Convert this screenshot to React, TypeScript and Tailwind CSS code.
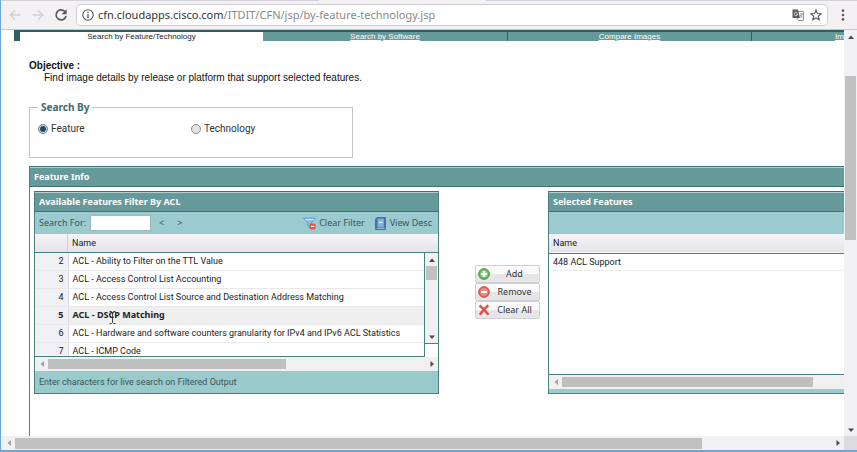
import { useState } from "react"
import clsx from "clsx"

const features = [
  { id: 2, name: "ACL - Ability to Filter on the TTL Value" },
  { id: 3, name: "ACL - Access Control List Accounting" },
  { id: 4, name: "ACL - Access Control List Source and Destination Address Matching" },
  { id: 5, name: "ACL - DSCP Matching" },
  { id: 6, name: "ACL - Hardware and software counters granularity for IPv4 and IPv6 ACL Statistics" },
  { id: 7, name: "ACL - ICMP Code" },
]

type Direction = "up" | "down" | "left" | "right"

const arrowPaths: Record<Direction, string> = {
  up: "M1 6L4 2.5L7 6Z",
  down: "M1 2.5L4 6L7 2.5Z",
  left: "M6 1L2.5 4L6 7Z",
  right: "M2.5 1L6 4L2.5 7Z",
}

function ArrowButton({ direction, muted }: { direction: Direction; muted?: boolean }) {
  return (
    <button
      aria-label={`Scroll ${direction}`}
      className={clsx("flex h-[13px] w-[13px] shrink-0 items-center justify-center", muted ? "text-[#a3a3a3]" : "text-[#4a4a4a]")}
    >
      <svg viewBox="0 0 8 8" className="h-2 w-2" fill="currentColor">
        <path d={arrowPaths[direction]} />
      </svg>
    </button>
  )
}

function BackIcon({ flip }: { flip?: boolean }) {
  return (
    <svg viewBox="0 0 12 12" className={clsx("h-3 w-3", flip && "rotate-180")} fill="none" stroke="#d3d1d6" strokeWidth="1.5">
      <path d="M11.5 6H1.5M6 1.3L1.3 6L6 10.7" />
    </svg>
  )
}

function BrowserBar() {
  return (
    <header className="shrink-0 border-b border-[#c9c5cc] bg-[#f3f1f4]">
      <div className="flex h-px bg-[#d5d1d8]">
        <div className="ml-[318px] w-[167px] bg-[#f3f1f4]" />
      </div>
      <div className="flex h-7 items-center pl-2">
        <button aria-label="Back" className="mr-[11px]"><BackIcon /></button>
        <button aria-label="Forward" className="mr-[10px]"><BackIcon flip /></button>
        <button aria-label="Reload" className="mr-2">
          <svg viewBox="0 0 14 14" className="h-[14px] w-[14px]">
            <path d="M11.2 4A5 5 0 1 0 12 8" fill="none" stroke="#5a5a5a" strokeWidth="1.7" />
            <path d="M12.6 1.2V6.2H7.6Z" fill="#5a5a5a" />
          </svg>
        </button>
        <div className="flex h-[22px] min-w-0 flex-1 items-center rounded-sm border border-[#cfccd2] bg-white pl-[5px] pr-[5px]">
          <svg viewBox="0 0 12 12" className="h-3 w-3 shrink-0" fill="none" stroke="#555">
            <circle cx="6" cy="6" r="5.2" strokeWidth="1.1" />
            <path d="M6 5.2V9M6 2.8V4.1" strokeWidth="1.4" />
          </svg>
          <div className="ml-1 flex-1 truncate font-['Noto_Sans','Open_Sans',sans-serif] text-[11px] leading-4 text-[#8a8a8a]">
            <span className="text-[#333]">cfn.cloudapps.cisco.com</span>/ITDIT/CFN/jsp/by-feature-technology.jsp
          </div>
          <button aria-label="Translate" className="mr-[6px]">
            <svg viewBox="0 0 12 12" className="h-3 w-3">
              <path d="M5 2.5H11.5V11.5H6.5L5 9Z" fill="#fff" stroke="#777" strokeWidth="0.8" />
              <path d="M0.5 0.5H6L8 9H0.5Z" fill="#5c5c5c" />
              <path d="M5.3 4A1.7 1.7 0 1 0 5.6 5H4" fill="none" stroke="#e8e8e8" strokeWidth="0.8" />
              <path d="M7.8 5H10.8M9.3 4V5M10.3 5C10 6.8 9 8 8.2 8.6M8.3 6C9 7.3 9.7 8.2 10.5 8.8" fill="none" stroke="#777" strokeWidth="0.7" />
            </svg>
          </button>
          <button aria-label="Bookmark">
            <svg viewBox="0 0 12 12" className="h-3 w-3" fill="none" stroke="#555" strokeWidth="1.1">
              <path d="M6 1L7.4 4.5L11.2 4.7L8.3 7.1L9.2 10.8L6 8.8L2.8 10.8L3.7 7.1L0.8 4.7L4.6 4.5Z" />
            </svg>
          </button>
        </div>
        <button aria-label="Menu" className="flex w-[29px] justify-center">
          <svg viewBox="0 0 4 12" className="h-3 w-1" fill="#5a5a5a">
            <circle cx="2" cy="1.6" r="1.3" />
            <circle cx="2" cy="6" r="1.3" />
            <circle cx="2" cy="10.4" r="1.3" />
          </svg>
        </button>
      </div>
    </header>
  )
}

function TabBar() {
  return (
    <nav className="flex h-[11px] border-t-2 border-[#2f5f5f] bg-[#669999] text-center font-['Liberation_Sans',Arial,sans-serif] text-[8px] leading-[9px] text-white">
      <a href="#feature" className="w-[249px] border-l-[6px] border-[#2f5f5f] bg-white text-[#222]">Search by Feature/Technology</a>
      <a href="#software" className="w-[244px] underline">Search by Software</a>
      <a href="#compare" className="w-[244px] border-l border-[#2f5f5f] underline">Compare Images</a>
      <a href="#images" className="w-[244px] border-l border-[#2f5f5f] pl-[83px] text-left underline">Images</a>
    </nav>
  )
}

function PanelTitle({ children }: { children: string }) {
  return (
    <h2 className="flex h-[21px] items-center border-y border-[#3f7373] bg-[#669999] pl-1 font-['Noto_Sans','Open_Sans',sans-serif] text-[9px] font-bold text-white shadow-[inset_0_1px_0_#b5d0d0]">
      {children}
    </h2>
  )
}

function SearchBy() {
  const [mode, setMode] = useState("Feature")
  return (
    <fieldset className="mt-[17px] h-[57px] w-[324px] border border-[#c4c4c8] pl-2">
      <legend className="px-[3px] font-['Noto_Sans','Open_Sans',sans-serif] text-[10px] leading-3 font-bold text-[#3d6b70]">Search By</legend>
      <div className="mt-[10px] flex text-[10px] leading-3 text-[#333]">
        {["Feature", "Technology"].map((option) => (
          <label key={option} className="flex w-[153px] items-center gap-[3px]">
            <input
              type="radio"
              name="search-by"
              checked={mode === option}
              onChange={() => setMode(option)}
              className="h-[10px] w-[10px] appearance-none rounded-full border border-[#8c8c8c] bg-[#e4e4e4] checked:bg-[#1e4a66] checked:shadow-[inset_0_0_0_1px_#dde6ec]"
            />
            {option}
          </label>
        ))}
      </div>
    </fieldset>
  )
}

function FilterIcon() {
  return (
    <svg viewBox="0 0 13 13" className="h-[13px] w-[13px]">
      <path d="M0.5 1.2H12.3L8 6.2V11.5L5 9.5V6.2Z" fill="#8dbbe2" stroke="#5d93c4" strokeWidth="0.8" />
      <path d="M2 2.6H10.8" stroke="#e6f2fb" />
      <rect x="6.6" y="6.4" width="6" height="6" rx="1.6" fill="#dd5546" />
      <path d="M8 9.4H11.2" stroke="#fff" strokeWidth="1.3" />
    </svg>
  )
}

function BookIcon() {
  return (
    <svg viewBox="0 0 11 13" className="h-[13px] w-[11px]">
      <path d="M2 0.6H10.4V12.4H0.6V2Z" fill="#4678ae" stroke="#2f5f95" strokeWidth="0.8" />
      <path d="M2.6 1.6H8.8V10.4H2.6Z" fill="#86afda" />
      <path d="M3.8 5.4H7.6" stroke="#e9f3fc" strokeWidth="1.2" />
      <path d="M1.8 11.4H9.6" stroke="#d5e4f2" strokeWidth="0.7" />
    </svg>
  )
}

function AvailableFeatures() {
  const [query, setQuery] = useState("")
  return (
    <section className="w-[405px] border-x border-b border-[#4a8080]">
      <PanelTitle>Available Features Filter By ACL</PanelTitle>
      <div className="flex h-[22px] items-center bg-linear-to-b from-[#9ccad0] to-[#98cbce] pr-[6px] pl-1 font-['Noto_Sans','Open_Sans',sans-serif] text-[#3c5558]">
        <label htmlFor="search-for">Search For:</label>
        <input
          id="search-for"
          value={query}
          onChange={(e) => setQuery(e.target.value)}
          className="ml-1 h-4 w-[61px] border border-[#9fb8bc] bg-white px-1"
        />
        <button aria-label="Previous match" className="ml-2">&lt;</button>
        <button aria-label="Next match" className="ml-[13px]">&gt;</button>
        <button className="ml-auto flex items-center gap-[3px]"><FilterIcon />Clear Filter</button>
        <button className="ml-[10px] flex items-center gap-1"><BookIcon />View Desc</button>
      </div>
      <div className="flex h-[19px] items-center border-b border-[#4a8080] bg-linear-to-b from-[#f7f5f9] to-[#e4e3e7]">
        <div className="h-full w-[33px] border-r border-[#cfcfd3]" />
        <span className="pl-1">Name</span>
      </div>
      <div className="flex h-[104px] items-start">
        <div className="h-full min-w-0 flex-1 overflow-hidden border-r border-b border-[#4a8080]">
          <table className="-mt-px w-full border-collapse">
            <tbody>
              {features.map((feature) => (
                <tr
                  key={feature.id}
                  className={clsx("h-[18px] border-b border-[#e9e9ed]", feature.id === 5 && "bg-[#efeff0] font-['Noto_Sans','Open_Sans',sans-serif] font-bold")}
                >
                  <td className="w-[33px] border-r border-[#dcdce0] bg-[#f1f0f4] p-0 pr-1 text-right">{feature.id}</td>
                  <td className="p-0 pl-1 whitespace-nowrap">{feature.name}</td>
                </tr>
              ))}
            </tbody>
          </table>
        </div>
        <div className="flex h-[91px] w-[13px] flex-col justify-between border-b border-[#4a8080] bg-[#f1f0f3]">
          <div>
            <ArrowButton direction="up" />
            <div className="mx-px h-[14px] bg-[#c1c1c1]" />
          </div>
          <ArrowButton direction="down" />
        </div>
      </div>
      <div className="flex h-[14px] items-center bg-[#f0f0f1]">
        <ArrowButton direction="left" muted />
        <div className="h-[10px] w-[238px] bg-[#bfc0c0]" />
        <div className="ml-auto"><ArrowButton direction="right" /></div>
      </div>
      <div className="flex h-[22px] items-center bg-[#99cbcd] pl-1 text-[#3c5558]">
        Enter characters for live search on Filtered Output
      </div>
    </section>
  )
}

const actions = [
  {
    label: "Add",
    icon: (
      <>
        <circle cx="6" cy="6" r="5.4" fill="#62b257" stroke="#438d3c" strokeWidth="0.8" />
        <circle cx="6" cy="6" r="3.8" fill="#93cf86" />
        <path d="M6 3V9M3 6H9" stroke="#fff" strokeWidth="1.8" />
      </>
    ),
  },
  {
    label: "Remove",
    icon: (
      <>
        <circle cx="6" cy="6" r="5.4" fill="#e0605a" stroke="#c2463f" strokeWidth="0.8" />
        <circle cx="6" cy="6" r="3.9" fill="#ec8c84" />
        <path d="M3 6H9" stroke="#fff" strokeWidth="1.9" />
      </>
    ),
  },
  {
    label: "Clear All",
    icon: <path d="M1.5 1.5C4 3.5 8 7.5 10.5 10.8M10.3 1.2C7 4 4 7.5 1.8 10.8" stroke="#e2514c" strokeWidth="2.5" fill="none" />,
  },
]

function Actions() {
  return (
    <div className="mt-[74px] mr-2 ml-9 flex w-[65px] flex-col font-['Noto_Sans','Open_Sans',sans-serif]">
      {actions.map(({ label, icon }) => (
        <button
          key={label}
          className="flex h-[18px] items-center rounded-xs border border-[#d0d0d3] bg-linear-to-b from-[#fafafa] from-50% to-[#e6e6e8] to-50% pl-[2px] text-[#333]"
        >
          <svg viewBox="0 0 12 12" className="h-3 w-3 shrink-0">{icon}</svg>
          <span className="flex-1 whitespace-nowrap">{label}</span>
        </button>
      ))}
    </div>
  )
}

function SelectedFeatures() {
  return (
    <section className="flex-1 border-x border-b border-[#4a8080]">
      <PanelTitle>Selected Features</PanelTitle>
      <div className="h-[22px] bg-[#99cbcf]" />
      <table className="w-full border-collapse text-left">
        <thead>
          <tr className="h-[19px] border-b border-[#4a8080] bg-linear-to-b from-[#f7f5f9] to-[#e4e3e7]">
            <th className="p-0 pl-1 font-normal">Name</th>
          </tr>
        </thead>
        <tbody>
          <tr className="h-[17px] border-b border-[#ececf0]">
            <td className="p-0 pl-1">448 ACL Support</td>
          </tr>
        </tbody>
      </table>
      <div className="h-[104px] border-b border-[#4a8080]" />
      <div className="flex h-[14px] items-center bg-[#f1f0f1]">
        <ArrowButton direction="left" muted />
        <div className="h-[10px] w-[251px] bg-[#c0bfbe]" />
      </div>
      <div className="h-1 bg-[#99cbcf]" />
    </section>
  )
}

function TextCursor() {
  return (
    <svg viewBox="0 0 7 13" className="pointer-events-none absolute top-[311px] left-[108px] h-[13px] w-[7px]" fill="none" stroke="#444">
      <path d="M0.5 0.5H2.5L3.5 1.5L4.5 0.5H6.5M3.5 1.5V11.5M0.5 12.5H2.5L3.5 11.5L4.5 12.5H6.5" />
    </svg>
  )
}

export default function App() {
  return (
    <div className="relative flex h-screen flex-col overflow-hidden border-b-2 border-l border-[#6ba6d9] bg-white font-['Roboto','Noto_Sans',sans-serif] text-[9px] leading-3 text-[#222]">
      <BrowserBar />
      <div className="flex min-h-0 flex-1">
        <main className="min-w-0 flex-1 overflow-hidden pl-[13px]">
          <div className="flex h-full w-[981px] flex-col">
            <TabBar />
            <div className="flex flex-1 flex-col pl-[15px]">
              <div className="mt-[19px] font-['Liberation_Sans',Arial,sans-serif] text-[10px] leading-3 text-[#111]">
                <p className="font-bold">Objective :</p>
                <p className="pl-[15px]">Find image details by release or platform that support selected features.</p>
              </div>
              <SearchBy />
              <div className="mt-2 flex-1 border-x border-[#4a8080]">
                <PanelTitle>Feature Info</PanelTitle>
                <div className="flex items-start px-1 pt-1">
                  <AvailableFeatures />
                  <Actions />
                  <SelectedFeatures />
                </div>
              </div>
            </div>
          </div>
        </main>
        <div className="flex w-[13px] shrink-0 flex-col bg-[#f1f0f2]">
          <ArrowButton direction="up" />
          <div className="mx-px mt-[33px] h-[164px] bg-[#c1c1c1]" />
          <div className="mt-auto"><ArrowButton direction="down" /></div>
        </div>
      </div>
      <div className="flex h-[14px] shrink-0 items-center bg-[#f1f0f2] pl-px">
        <ArrowButton direction="left" muted />
        <div className="h-[11px] w-[687px] bg-[#c1c1c1]" />
        <div className="ml-auto"><ArrowButton direction="right" /></div>
        <div className="h-full w-[13px] bg-[#dcdbde]" />
      </div>
      <TextCursor />
    </div>
  )
}
